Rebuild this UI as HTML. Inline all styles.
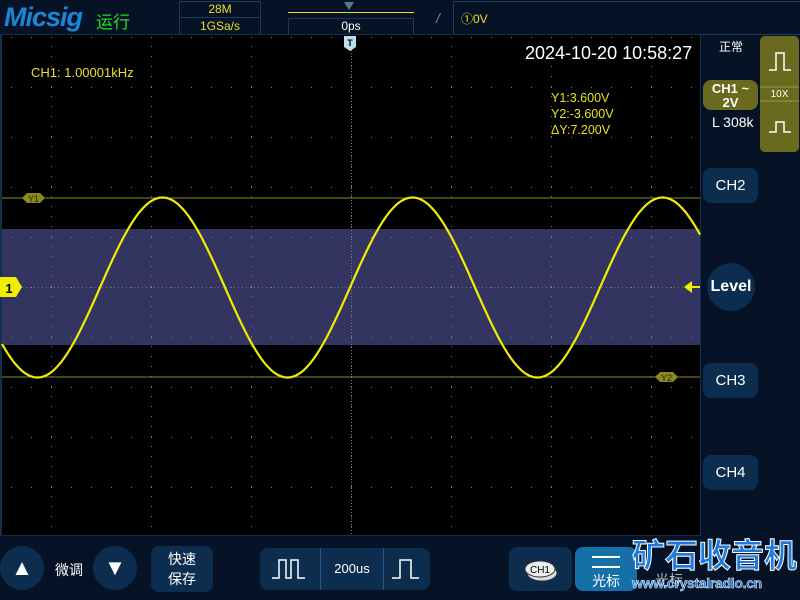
<!DOCTYPE html>
<html><head><meta charset="utf-8"><style>
body{margin:0;width:800px;height:600px;background:#061226;overflow:hidden;position:relative;font-family:"Liberation Sans","Noto Sans CJK SC",sans-serif;}
.a{position:absolute;white-space:nowrap}
.btn{position:absolute;background:#0c2d4d;border-radius:8px;color:#fff;text-align:center}
</style></head><body>
<div class="a" style="left:4px;top:2px;font:italic bold 27px 'Liberation Sans',sans-serif;color:#1a86d8;letter-spacing:-1px">Micsig</div>
<div class="a" style="left:96px;top:8px;font-size:17px;color:#22dd22">运行</div>
<div class="a" style="left:179px;top:1px;width:80px;height:32px;border:1px solid #1b3a5c;"></div>
<div class="a" style="left:179px;top:17px;width:82px;height:1px;background:#1b3a5c"></div>
<div class="a" style="left:179px;top:2px;width:82px;text-align:center;font-size:12px;color:#e8e020">28M</div>
<div class="a" style="left:179px;top:19px;width:82px;text-align:center;font-size:12px;color:#e8e020">1GSa/s</div>
<div class="a" style="left:288px;top:12px;width:126px;height:1px;background:#e8e020"></div>
<div class="a" style="left:344px;top:2px;width:0;height:0;border-left:5px solid transparent;border-right:5px solid transparent;border-top:8px solid #5a7a90"></div>
<div class="a" style="left:288px;top:18px;width:124px;height:15px;border:1px solid #1b3a5c;color:#fff;font-size:12px;text-align:center;line-height:15px">0ps</div>
<div class="a" style="left:436px;top:10px;color:#889;font-size:14px;font-style:italic">/</div>
<div class="a" style="left:453px;top:1px;width:346px;height:32px;border:1px solid #1b3a5c;"></div>
<div class="a" style="left:461px;top:10px;font-size:12px;color:#e8e020">①0V</div>
<div class="a" style="left:0;top:34px;width:701px;height:502px;background:#000;border:1px solid #14304a;border-width:1px 1px 1px 2px;box-sizing:border-box"></div>
<svg class="a" style="left:0;top:0" width="800" height="600" id="sv">
<rect x="2" y="229" width="698" height="116" fill="#333560"/>
<line x1="2" y1="198" x2="700" y2="198" stroke="#8a8a20" stroke-width="1"/>
<line x1="2" y1="377" x2="700" y2="377" stroke="#8a8a20" stroke-width="1"/>
<g id="grid" fill="#777"></g>
<path id="sine" fill="none" stroke="#f0ee00" stroke-width="2.2"/>
<polygon points="22,198 27,193 40,193 45,198 40,203 27,203" fill="#8a8a20"/>
<text x="33.5" y="202" font-size="9" fill="#222" text-anchor="middle" font-family="Liberation Sans">Y1</text>
<polygon points="655,377 660,372 673,372 678,377 673,382 660,382" fill="#8a8a20"/>
<text x="666.5" y="381" font-size="9" fill="#222" text-anchor="middle" font-family="Liberation Sans">Y2</text>
<polygon points="0,277 16,277 22,287 16,297 0,297" fill="#f0ee00"/>
<text x="9" y="293" font-size="13" font-weight="bold" fill="#000" text-anchor="middle" font-family="Liberation Sans">1</text>
<polygon points="684,287 692,281 692,293" fill="#f0ee00"/>
<line x1="692" y1="287" x2="700" y2="287" stroke="#f0ee00" stroke-width="2"/>
<rect x="344" y="36" width="12" height="11" fill="#bde" /><polygon points="344,47 356,47 350,51" fill="#bde"/>
<text x="350" y="46" font-size="9" fill="#000" text-anchor="middle" font-family="Liberation Sans" font-weight="bold">T</text>
</svg>
<div class="a" style="left:31px;top:65px;font-size:13px;color:#e8e020">CH1: 1.00001kHz</div>
<div class="a" style="left:525px;top:43px;font-size:18px;color:#fff">2024-10-20 10:58:27</div>
<div class="a" style="left:551px;top:90px;font-size:12.5px;color:#e8e020;line-height:16px">Y1:3.600V<br>Y2:-3.600V<br>ΔY:7.200V</div>
<div class="a" style="left:719px;top:38px;font-size:12px;color:#fff">正常</div>
<div class="a" style="left:760px;top:36px;width:39px;height:116px;background:#6a6a1e;border-radius:5px"></div>
<svg class="a" style="left:760px;top:36px" width="39" height="116"><path d="M9,34 H16 V17 H24 V34 H31" stroke="#fff" fill="none" stroke-width="1.5"/><line x1="0" y1="51" x2="39" y2="51" stroke="#9a9a40"/><line x1="0" y1="65" x2="39" y2="65" stroke="#9a9a40"/><path d="M9,96 H16 V86 H24 V96 H31" stroke="#fff" fill="none" stroke-width="1.5"/></svg>
<div class="a" style="left:760px;top:89px;width:39px;text-align:center;font-size:10px;color:#fff">10X</div>
<div class="btn" style="left:703px;top:80px;width:55px;height:30px;background:#6a6a1e;font-weight:bold;font-size:13px;line-height:14px;padding-top:2px;box-sizing:border-box">CH1 ~<br>2V</div>
<div class="a" style="left:712px;top:114px;font-size:14px;color:#fff">L 308k</div>
<div class="btn" style="left:703px;top:168px;width:55px;height:35px;line-height:35px;font-size:15px">CH2</div>
<div class="btn" style="left:707px;top:263px;width:48px;height:48px;border-radius:50%;line-height:48px;font-size:16px;font-weight:bold">Level</div>
<div class="btn" style="left:703px;top:363px;width:55px;height:35px;line-height:35px;font-size:15px">CH3</div>
<div class="btn" style="left:703px;top:455px;width:55px;height:35px;line-height:35px;font-size:15px">CH4</div>
<div class="btn" style="left:0;top:546px;width:44px;height:44px;border-radius:50%;font-size:22px;line-height:44px">▲</div>
<div class="a" style="left:55px;top:560px;font-size:14px;color:#fff">微调</div>
<div class="btn" style="left:93px;top:546px;width:44px;height:44px;border-radius:50%;font-size:22px;line-height:44px">▼</div>
<div class="btn" style="left:151px;top:546px;width:62px;height:46px;font-size:14px;line-height:20px;padding-top:3px;box-sizing:border-box">快速<br>保存</div>
<div class="btn" style="left:260px;top:548px;width:170px;height:42px"></div>
<div class="a" style="left:320px;top:548px;width:1px;height:42px;background:#1f5a8a"></div>
<div class="a" style="left:383px;top:548px;width:1px;height:42px;background:#1f5a8a"></div>
<div class="a" style="left:321px;top:561px;width:62px;text-align:center;font-size:13px;color:#fff">200us</div>
<svg class="a" style="left:260px;top:548px" width="170" height="42"><path d="M12,30 H19 V12 H26 V30 H31 V12 H38 V30 H45" stroke="#fff" fill="none" stroke-width="1.5"/><path d="M132,30 H140 V12 H151 V30 H159" stroke="#fff" fill="none" stroke-width="1.5"/></svg>
<div class="btn" style="left:509px;top:547px;width:63px;height:44px"></div>
<svg class="a" style="left:509px;top:547px" width="63" height="44"><ellipse cx="33" cy="26" rx="15" ry="8" fill="#ddd" stroke="#333"/><ellipse cx="31" cy="22" rx="15" ry="8" fill="#eee" stroke="#333"/><text x="31" y="26" font-size="10" text-anchor="middle" font-family="Liberation Sans" fill="#000">CH1</text></svg>
<div class="btn" style="left:575px;top:547px;width:62px;height:44px;background:#1670a8;font-size:14px;padding-top:24px;box-sizing:border-box">光标</div>
<div class="a" style="left:592px;top:556px;width:28px;height:2px;background:#fff"></div>
<div class="a" style="left:592px;top:566px;width:28px;height:2px;background:#fff"></div>
<div class="a" style="left:655px;top:570px;font-size:14px;color:#bbb">光标</div>
<div class="a" style="left:632px;top:536px;font-size:33px;line-height:40px;font-weight:bold;color:#1a7ae0;-webkit-text-stroke:1px #fff">矿石收音机</div>
<div class="a" style="left:632px;top:575px;font-size:14px;font-weight:bold;color:#1a7ae0;-webkit-text-stroke:0.5px #fff;letter-spacing:-0.3px">www.crystalradio.cn</div>
<script>
var g=document.getElementById('grid'),s='';
function d(x,y){s+='<rect x="'+x+'" y="'+y+'" width="1" height="1"/>';}
for(var x=51;x<=700;x+=100)for(var y=46;y<536;y+=10)d(x,y);
for(var y=37;y<536;y+=50)for(var x=11;x<700;x+=20)d(x,y);
for(var x=2;x<700;x+=4)d(x,287);
for(var y=47;y<536;y+=3)d(351,y);
g.innerHTML=s;
var p='';for(var x=2;x<=700;x+=1){var y=287.5-90*Math.sin(2*Math.PI*(x-100)/250);p+=(x==2?'M':'L')+x+','+y.toFixed(1);}
document.getElementById('sine').setAttribute('d',p);
</script>
</body></html>
